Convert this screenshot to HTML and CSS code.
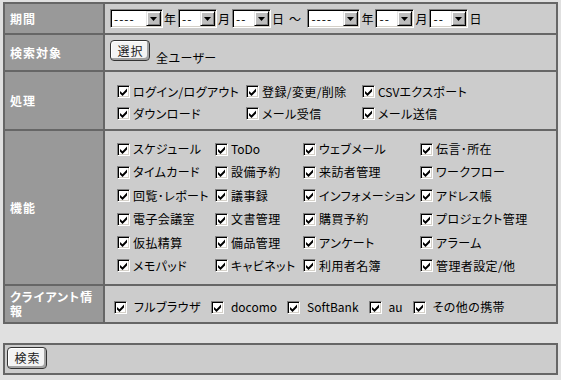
FILE: index.html
```html
<!DOCTYPE html>
<html lang="ja">
<head>
<meta charset="utf-8">
<title>アクセスログ検索</title>
<link rel="stylesheet" href="styles.css">
</head>
<body>
<svg class="defs" width="0" height="0">
  <symbol id="ck" viewBox="0 0 9 9"><path d="M1 4L3.5 6.2L8 1.6L8 4.6L3.5 9L1 6.6Z"/></symbol>
  <symbol id="dn" viewBox="0 0 7 4"><path d="M0 0H7L3.5 4Z"/></symbol>
</svg>
<form class="search">
  <div class="grid">
    <div class="head">期間</div>
    <div class="cell dates">
      <span class="sel yr"><span class="val">----</span><span class="btn"><svg><use href="#dn"/></svg></span></span><span class="unit">年</span>
      <span class="sel"><span class="val">--</span><span class="btn"><svg><use href="#dn"/></svg></span></span><span class="unit">月</span>
      <span class="sel"><span class="val">--</span><span class="btn"><svg><use href="#dn"/></svg></span></span><span class="unit">日</span>
      <span class="tilde">～</span>
      <span class="sel yr"><span class="val">----</span><span class="btn"><svg><use href="#dn"/></svg></span></span><span class="unit">年</span>
      <span class="sel"><span class="val">--</span><span class="btn"><svg><use href="#dn"/></svg></span></span><span class="unit">月</span>
      <span class="sel"><span class="val">--</span><span class="btn"><svg><use href="#dn"/></svg></span></span><span class="unit">日</span>
    </div>

    <div class="head">検索対象</div>
    <div class="cell target">
      <button type="button" class="push">選択</button>
      <span class="who">全ユーザー</span>
    </div>

    <div class="head">処理</div>
    <div class="cell">
      <div class="opts acts">
        <label class="opt"><span class="cb"><svg><use href="#ck"/></svg></span>ログイン/ログアウト</label>
        <label class="opt"><span class="cb"><svg><use href="#ck"/></svg></span>登録/変更/削除</label>
        <label class="opt"><span class="cb"><svg><use href="#ck"/></svg></span><span class="en">CSV</span>エクスポート</label>
        <label class="opt"><span class="cb"><svg><use href="#ck"/></svg></span>ダウンロード</label>
        <label class="opt"><span class="cb"><svg><use href="#ck"/></svg></span>メール受信</label>
        <label class="opt"><span class="cb"><svg><use href="#ck"/></svg></span>メール送信</label>
      </div>
    </div>

    <div class="head">機能</div>
    <div class="cell">
      <div class="opts funcs">
        <label class="opt"><span class="cb"><svg><use href="#ck"/></svg></span>スケジュール</label>
        <label class="opt"><span class="cb"><svg><use href="#ck"/></svg></span><span class="en">ToDo</span></label>
        <label class="opt"><span class="cb"><svg><use href="#ck"/></svg></span>ウェブメール</label>
        <label class="opt"><span class="cb"><svg><use href="#ck"/></svg></span>伝言･所在</label>
        <label class="opt"><span class="cb"><svg><use href="#ck"/></svg></span>タイムカード</label>
        <label class="opt"><span class="cb"><svg><use href="#ck"/></svg></span>設備予約</label>
        <label class="opt"><span class="cb"><svg><use href="#ck"/></svg></span>来訪者管理</label>
        <label class="opt"><span class="cb"><svg><use href="#ck"/></svg></span>ワークフロー</label>
        <label class="opt"><span class="cb"><svg><use href="#ck"/></svg></span>回覧･レポート</label>
        <label class="opt"><span class="cb"><svg><use href="#ck"/></svg></span>議事録</label>
        <label class="opt"><span class="cb"><svg><use href="#ck"/></svg></span>インフォメーション</label>
        <label class="opt"><span class="cb"><svg><use href="#ck"/></svg></span>アドレス帳</label>
        <label class="opt"><span class="cb"><svg><use href="#ck"/></svg></span>電子会議室</label>
        <label class="opt"><span class="cb"><svg><use href="#ck"/></svg></span>文書管理</label>
        <label class="opt"><span class="cb"><svg><use href="#ck"/></svg></span>購買予約</label>
        <label class="opt"><span class="cb"><svg><use href="#ck"/></svg></span>プロジェクト管理</label>
        <label class="opt"><span class="cb"><svg><use href="#ck"/></svg></span>仮払精算</label>
        <label class="opt"><span class="cb"><svg><use href="#ck"/></svg></span>備品管理</label>
        <label class="opt"><span class="cb"><svg><use href="#ck"/></svg></span>アンケート</label>
        <label class="opt"><span class="cb"><svg><use href="#ck"/></svg></span>アラーム</label>
        <label class="opt"><span class="cb"><svg><use href="#ck"/></svg></span>メモパッド</label>
        <label class="opt"><span class="cb"><svg><use href="#ck"/></svg></span>キャビネット</label>
        <label class="opt"><span class="cb"><svg><use href="#ck"/></svg></span>利用者名簿</label>
        <label class="opt"><span class="cb"><svg><use href="#ck"/></svg></span>管理者設定/他</label>
      </div>
    </div>

    <div class="head">クライアント情報</div>
    <div class="cell clients">
      <label class="opt"><span class="cb"><svg><use href="#ck"/></svg></span>フルブラウザ</label>
      <label class="opt"><span class="cb"><svg><use href="#ck"/></svg></span><span class="en">docomo</span></label>
      <label class="opt"><span class="cb"><svg><use href="#ck"/></svg></span><span class="en">SoftBank</span></label>
      <label class="opt"><span class="cb"><svg><use href="#ck"/></svg></span><span class="en">au</span></label>
      <label class="opt"><span class="cb"><svg><use href="#ck"/></svg></span>その他の携帯</label>
    </div>
  </div>

  <div class="footer">
    <button type="button" class="push go">検索</button>
  </div>
</form>
</body>
</html>
```

FILE: styles.css
```css
html {
    background: #e0e0e0;
}

body {
    margin: 0;
    padding: 2px 3px 0 3px;
    font-family: "Noto Sans CJK JP", "Noto Sans", sans-serif;
    font-size: 12px;
    letter-spacing: 0.4px;
    font-feature-settings: "palt";
    color: #000;
}

.defs {
    position: absolute;
}

.en {
    letter-spacing: 0;
}

/* main table */
.grid {
    display: grid;
    grid-template-columns: 98px 1fr;
    grid-template-rows: 29px 35px 57px 153px 36px;
    gap: 2px;
    padding: 2px;
    background: #666;
}

.head {
    display: flex;
    align-items: center;
    padding: 0 4px 0 5px;
    background: #999;
    color: #fff;
    font-weight: bold;
    letter-spacing: 1px;
    line-height: 14px;
}

.cell {
    display: flex;
    align-items: center;
    background: #ccc;
}

/* date selects */
.dates {
    padding-left: 5px;
}

.sel {
    display: inline-flex;
    box-sizing: border-box;
    width: 39px;
    height: 19px;
    padding: 1px;
    border: 1px solid;
    border-color: #808080 #fff #fff #808080;
    box-shadow: inset 1px 1px #000, inset -1px -1px #d4d0c8;
    background: #fff;
}

.sel.yr {
    width: 53px;
}

.val {
    flex: 1;
    padding-left: 2px;
    line-height: 15px;
    letter-spacing: 1px;
}

.btn {
    display: flex;
    align-items: center;
    justify-content: center;
    box-sizing: border-box;
    width: 15px;
    height: 15px;
    border: 1px solid;
    border-color: #e4e4e4 #000 #000 #e4e4e4;
    box-shadow: inset 1px 1px #fff, inset -1px -1px #808080;
    background: #bdbdbd;
}

.btn svg {
    width: 7px;
    height: 4px;
    margin-left: -1px;
}

.unit {
    padding: 0 1px;
    letter-spacing: 1px;
    line-height: 14px;
}

.tilde {
    margin: 0 6px 0 3px;
}

/* buttons */
.push {
    box-sizing: border-box;
    width: 40px;
    height: 21px;
    padding: 0 0 1px 1px;
    border: 1px solid #333;
    border-radius: 4px;
    box-shadow: inset -2px -2px #a4a4a4, inset 1px 1px #fff;
    background: #f4f4f4;
    font: inherit;
    letter-spacing: 1px;
    color: #222;
}

.target {
    align-items: flex-start;
    padding: 5px 5px 0;
}

.who {
    margin: 11px 0 0 6px;
    line-height: 14px;
}

/* checkbox lists */
.opts {
    display: grid;
    grid-template-columns: 129px 116px auto;
    grid-auto-rows: 22px;
    align-items: center;
    padding-left: 12px;
}

.acts {
    padding-top: 4px;
}

.funcs {
    grid-template-columns: 98px 88px 117px auto;
    grid-auto-rows: 23.4px;
}

.opt {
    display: flex;
    align-items: center;
    white-space: nowrap;
    line-height: 14px;
}

.cb {
    display: flex;
    align-items: center;
    justify-content: center;
    flex: none;
    box-sizing: border-box;
    width: 13px;
    height: 13px;
    margin-right: 3px;
    border: 1px solid;
    border-color: #808080 #fff #fff #808080;
    box-shadow: inset 1px 1px #000, inset -1px -1px #d4d0c8;
    background: #fff;
}

.cb svg {
    width: 9px;
    height: 9px;
}

.clients {
    padding: 6px 0 0 9px;
}

.clients .cb {
    margin-right: 7px;
}

.clients .opt {
    margin-right: 10px;
}

/* bottom bar */
.footer {
    margin-top: 19px;
    padding: 2px 2px 4px;
    border: 2px solid #666;
    background: #ccc;
}

.go {
    height: 22px;
}
```
